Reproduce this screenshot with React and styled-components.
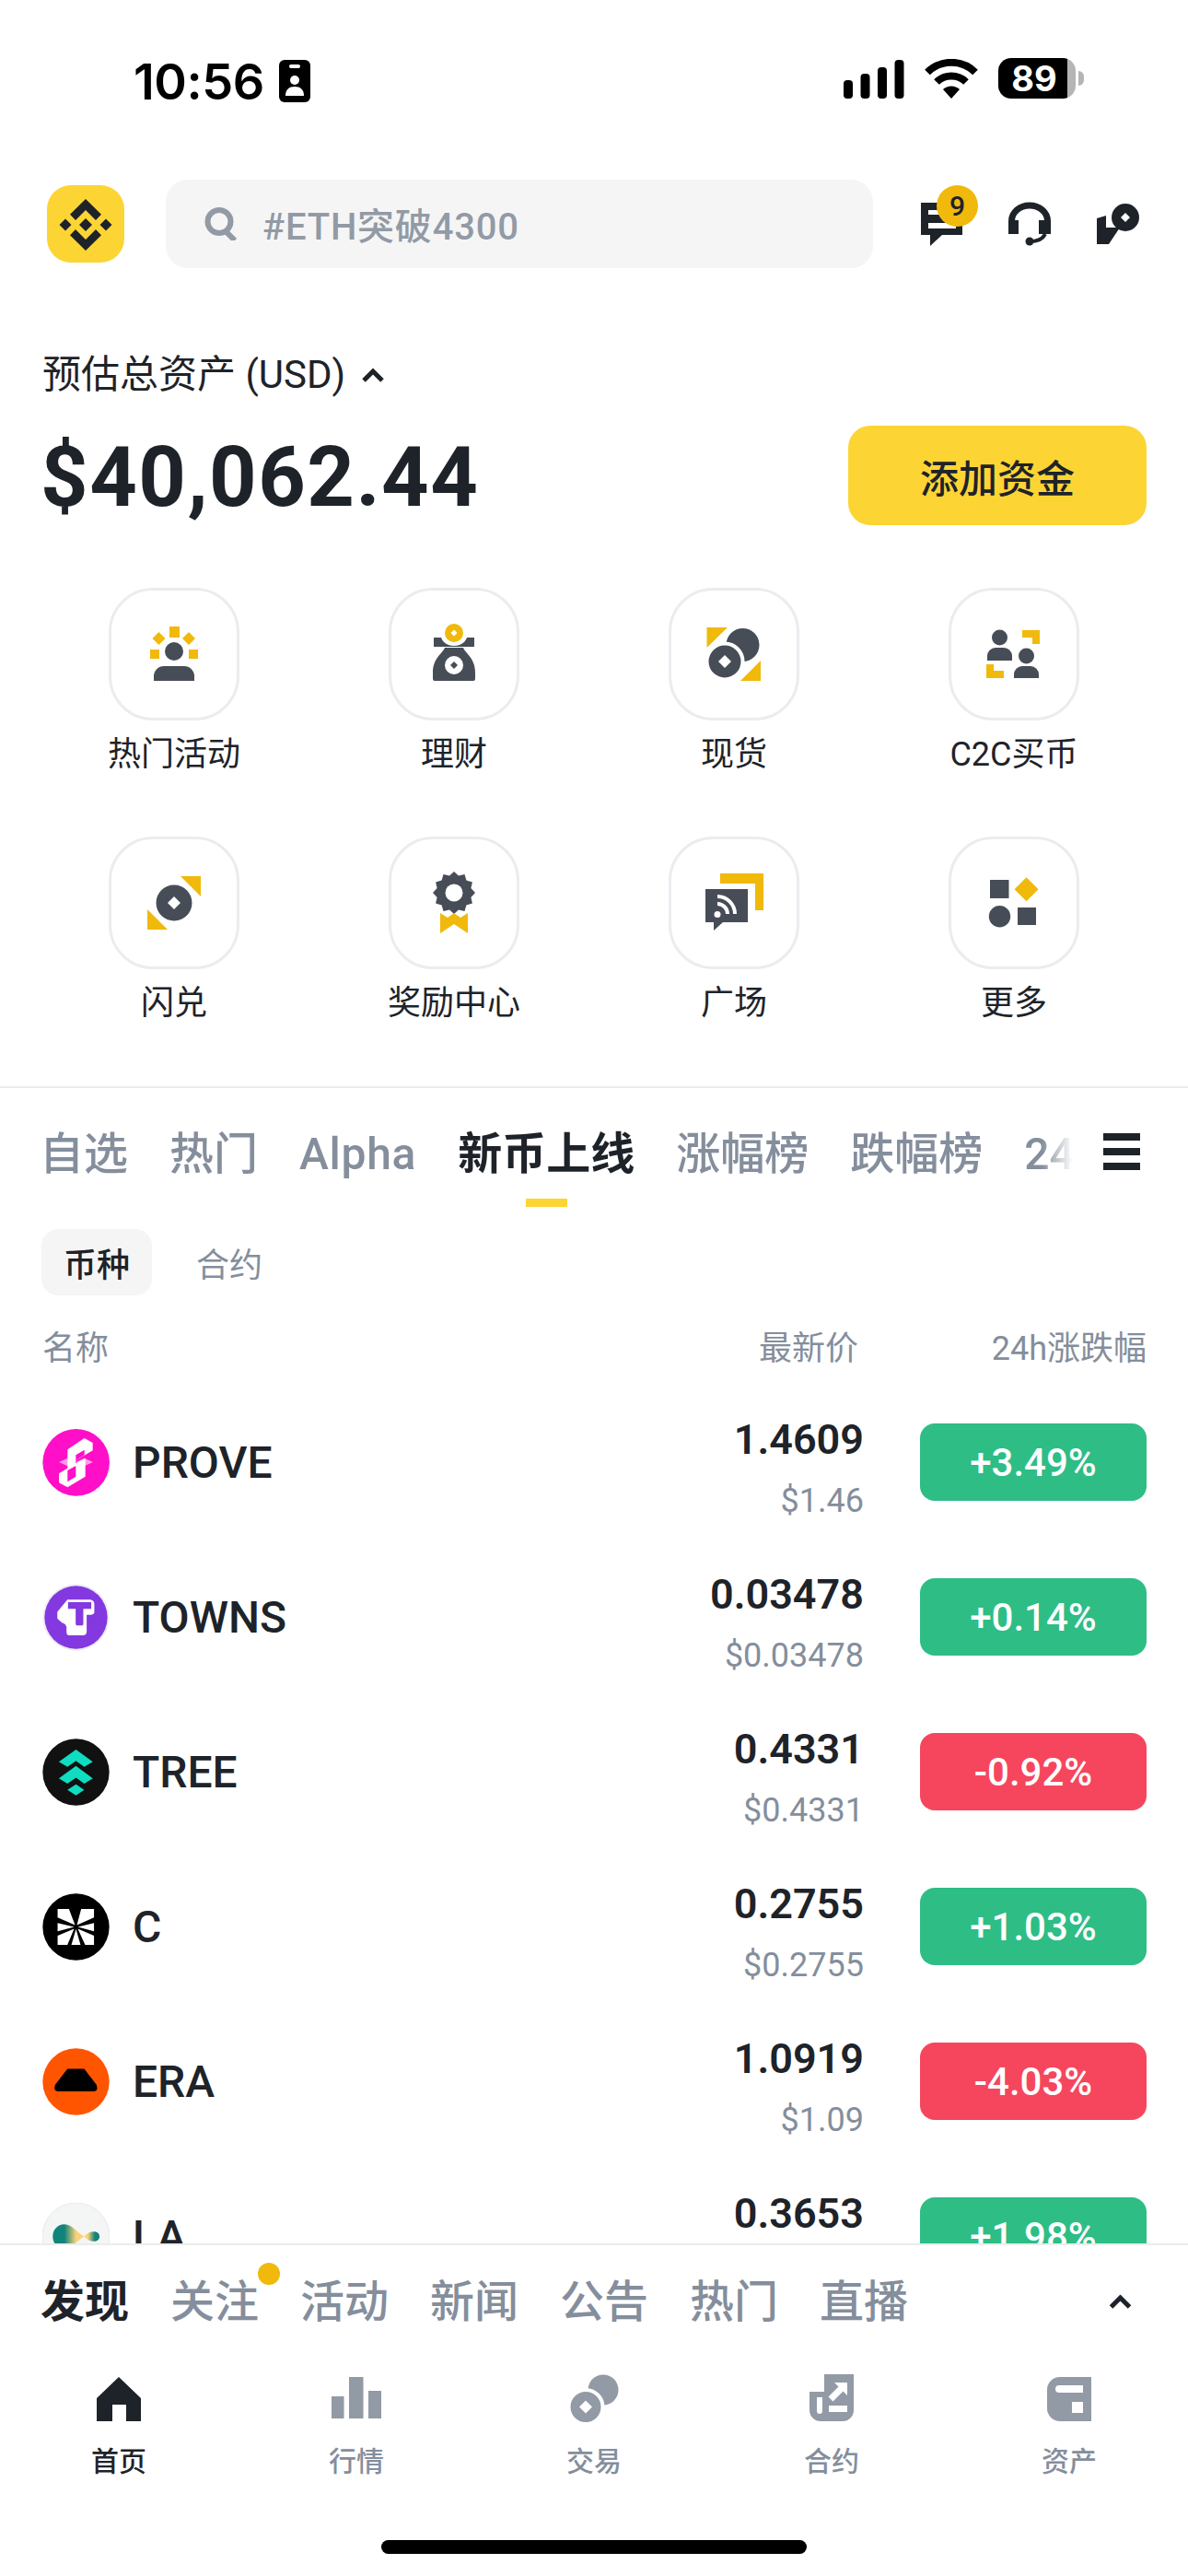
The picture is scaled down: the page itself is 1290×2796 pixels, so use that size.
import React from 'react'
import styled, { createGlobalStyle } from 'styled-components'

const DARK = '#1e2329'
const GRAY = '#848e9c'
const ICON = '#474d57'
const GOLD = '#f0b90b'
const YELLOW = '#fcd535'
const NAV_GRAY = '#929aa5'

const GlobalStyle = createGlobalStyle`
   html, body {
      margin: 0;
      padding: 0;
      background: #fff;
   }
   body {
      font-family: Roboto, "Noto Sans CJK SC", sans-serif;
      color: ${DARK};
   }
   * {
      box-sizing: border-box;
   }
`

const diamond = (cx, cy, r) => `${cx},${cy - r} ${cx + r},${cy} ${cx},${cy + r} ${cx - r},${cy}`

const star = (cx, cy, outer, inner, n) => {
   const pts = []
   for (let i = 0; i < n * 2; i++) {
      const r = i % 2 ? inner : outer
      const a = (Math.PI * i) / n - Math.PI / 2
      pts.push(`${(cx + r * Math.cos(a)).toFixed(1)},${(cy + r * Math.sin(a)).toFixed(1)}`)
   }
   return pts.join(' ')
}

const IdBadge = () => (
   <svg width="34" height="46" viewBox="0 0 34 46">
      <rect width="34" height="46" rx="6" fill="#000" />
      <rect x="11" y="5" width="12" height="4" rx="2" fill="#fff" />
      <circle cx="17" cy="22" r="5" fill="#fff" />
      <path d="M7 39c0-7 4-10 10-10s10 3 10 10z" fill="#fff" />
   </svg>
)

const SignalIcon = () => (
   <svg width="66" height="42" viewBox="0 0 66 42" fill="#000">
      <rect x="0" y="22" width="10" height="20" rx="4" />
      <rect x="18.500" y="15" width="10" height="27" rx="4" />
      <rect x="37" y="8" width="10" height="34" rx="4" />
      <rect x="55.500" y="0" width="10" height="42" rx="4" />
   </svg>
)

const WifiIcon = () => (
   <svg width="60" height="43" viewBox="0 0 60 43" fill="none" stroke="#000" strokeWidth="8">
      <path d="M4 14.500a37 37 0 0 1 52 0" />
      <path d="M14 25a23 23 0 0 1 32 0" />
      <path d="M30 43l-9-10a13 13 0 0 1 18 0z" fill="#000" stroke="none" />
   </svg>
)

const Logo = () => (
   <svg width="84" height="84" viewBox="0 0 84 84">
      <rect width="84" height="84" rx="26" fill={YELLOW} />
      <g fill={DARK}>
         <path d="M42 15l17 16.700-6 6.300-11-11-11 11-6-6.300z" />
         <path d="M42 71l17-16.700-6-6.300-11 11-11-11-6 6.300z" />
         <polygon points={diamond(42, 43, 7)} />
         <polygon points={diamond(20, 43, 6.500)} />
         <polygon points={diamond(64, 43, 6.500)} />
      </g>
   </svg>
)

const SearchIcon = () => (
   <svg width="38" height="36" viewBox="0 0 38 36" fill="none" stroke={NAV_GRAY}>
      <circle cx="18" cy="15.500" r="12.500" strokeWidth="6" />
      <path d="M24 25l11 11" strokeWidth="6" />
   </svg>
)

const MessageIcon = () => (
   <svg width="45" height="47" viewBox="0 0 45 47">
      <path d="M0 0h45v35H23L10 47V35H0z" fill={DARK} />
      <rect x="8" y="8" width="24" height="5" fill="#fff" />
      <rect x="8" y="22" width="30" height="6" fill="#fff" />
   </svg>
)

const HeadsetIcon = () => (
   <svg width="46" height="48" viewBox="0 0 46 48" fill="none" stroke={DARK}>
      <path d="M3.500 21a19.500 17 0 0 1 39 0" strokeWidth="7" />
      <rect x="0" y="20" width="11" height="15" fill={DARK} stroke="none" />
      <rect x="33" y="20" width="13" height="15" fill={DARK} stroke="none" />
      <path d="M40 35c-3 6-9 8-17 8" strokeWidth="4" />
      <circle cx="23" cy="43" r="4.500" fill={DARK} stroke="none" />
   </svg>
)

const TransferIcon = () => (
   <svg width="46" height="47" viewBox="0 0 46 47">
      <circle cx="31" cy="16" r="15" fill={DARK} />
      <polygon points={diamond(31, 16, 5)} fill="#fff" />
      <path d="M0 17l10-3v13h15L13 45H0z" fill={DARK} />
   </svg>
)

const Chevron = ({ width = 28 }) => (
   <svg width={width} height="18" viewBox="0 0 26 18" fill="none" stroke={DARK} strokeWidth="5">
      <path d="M3 15l10-10 10 10" />
   </svg>
)

const ActivityIcon = () => (
   <>
      <g fill={GOLD}>
         <rect x="31" y="6" width="11" height="12" />
         <polygon points={diamond(19.500, 19, 7)} />
         <polygon points={diamond(52, 19, 7)} />
         <rect x="10" y="31" width="10" height="10" />
         <rect x="52" y="31" width="10" height="10" />
      </g>
      <g fill={ICON}>
         <circle cx="36" cy="33" r="10" />
         <path d="M14 65V60a11 11 0 0 1 11-11h22a11 11 0 0 1 11 11v5z" />
      </g>
   </>
)

const EarnIcon = () => (
   <>
      <circle cx="36" cy="13" r="10" fill={GOLD} />
      <polygon points={diamond(36, 13, 3.500)} fill="#fff" />
      <g fill={ICON}>
         <path d="M14 18h8c2 6 8 9 14 9s12-3 14-9h8v10H14z" />
         <path d="M26 29h20c2 6 13 11 13 27v7a2 2 0 0 1-2 2H15a2 2 0 0 1-2-2v-7c0-16 11-21 13-27z" />
      </g>
      <circle cx="36" cy="48" r="10" fill="#fff" />
      <polygon points={diamond(36, 48, 4)} fill={ICON} />
   </>
)

const SpotIcon = () => (
   <>
      <g fill={GOLD}>
         <polygon points="6.500,7 29,7 6.500,29" />
         <polygon points="43,65 65,65 65,43" />
      </g>
      <circle cx="45.500" cy="26" r="18" fill={ICON} />
      <circle cx="26" cy="44" r="19.500" fill={ICON} stroke="#fff" strokeWidth="4" />
      <polygon points={diamond(26, 44, 7)} fill="#fff" />
   </>
)

const P2pIcon = () => (
   <>
      <g fill={ICON}>
         <circle cx="20.500" cy="18" r="8.500" />
         <path d="M7 43v-5a9 9 0 0 1 9-9h9a9 9 0 0 1 9 9v5z" />
         <circle cx="49.500" cy="38" r="8.500" />
         <path d="M36 62v-4a9 9 0 0 1 9-9h9a9 9 0 0 1 9 9v4z" />
      </g>
      <g fill={GOLD}>
         <path d="M45 10h19v15h-8v-7H45z" />
         <path d="M6 47h8v7h11v8H6z" />
      </g>
   </>
)

const ConvertIcon = () => (
   <>
      <g fill={GOLD}>
         <polygon points="43,7 65,7 65,29" />
         <polygon points="7,43 29,65 7,65" />
      </g>
      <circle cx="36" cy="36" r="19.500" fill={ICON} />
      <polygon points={diamond(36, 36, 7)} fill="#fff" />
   </>
)

const RewardIcon = () => (
   <>
      <polygon points={star(36, 25, 23, 19, 12)} fill={ICON} />
      <circle cx="36" cy="25" r="9.500" fill="#fff" />
      <polygon points="21,47 29,52 36,47 43,52 51,47 51,69 36,59 21,69" fill={GOLD} />
   </>
)

const SquareIcon = () => (
   <>
      <path d="M21 4h47v40h-9V15H21z" fill={GOLD} />
      <path d="M5 21h46v36H24l-10 9V57H5z" fill={ICON} />
      <circle cx="18" cy="48.500" r="3.500" fill="#fff" />
      <g fill="none" stroke="#fff" strokeWidth="4">
         <path d="M18 37a11 11 0 0 1 11 11" />
         <path d="M18 29a19 19 0 0 1 19 19" />
      </g>
   </>
)

const MoreIcon = () => (
   <>
      <rect x="10" y="11" width="20.500" height="20" fill={ICON} />
      <polygon points={diamond(49.500, 21.300, 13)} fill={GOLD} />
      <circle cx="20.500" cy="50.700" r="11.700" fill={ICON} />
      <rect x="40" y="41" width="20" height="19" fill={ICON} />
   </>
)

const ProveLogo = () => (
   <svg width="73" height="73" viewBox="18 15 219 219">
      <circle cx="128" cy="124" r="109" fill="#ff0fc8" />
      <polygon points="72,123 100,110 127,123 100,136" fill="#ff9ade" />
      <polygon points="127,123 155,110 183,123 155,136" fill="#ff9ade" />
      <polygon points="100,82 155,45 182,60 182,85 127,118 127,135 100,150" fill="#fff" />
      <polygon points="158,110 158,170 100,205 72,190 72,160 127,127" fill="#fff" />
      <polygon points="127,100 155,83 155,100 127,118" fill="#ff0fc8" />
      <polygon points="100,150 127,135 127,170 100,187" fill="#ff0fc8" />
   </svg>
)

const TownsLogo = () => (
   <svg width="73" height="73" viewBox="18 518 220 220">
      <circle cx="128" cy="628" r="109" fill="#eceef1" />
      <circle cx="128" cy="628" r="103" fill="#8338e0" />
      <path d="M100 570H175Q190 572 188 590V612Q186 620 170 620H163V675Q163 687 150 687H105Q97 687 97 675V660Q95 648 82 645L67 632V610Z" fill="#fff" />
      <path d="M102 578H178V600H152V650Q152 654 148 654H131Q127 654 127 650V600H102Z" fill="#8338e0" />
   </svg>
)

const TreeLogo = () => (
   <svg width="73" height="73" viewBox="18 1022 220 220">
      <circle cx="128" cy="1132" r="109" fill="#111" />
      <g fill="#0fdcc0">
         <polygon points="72,1098 128,1058 183,1098 155,1115 128,1095 100,1115" />
         <polygon points="72,1152 128,1112 183,1152 155,1170 128,1150 100,1170" />
         <polygon points="100,1190 128,1172 155,1190 128,1208" />
      </g>
   </svg>
)

const CLogo = () => (
   <svg width="73" height="73" viewBox="18 11 220 220">
      <circle cx="128" cy="121" r="109" fill="#000" />
      <g fill="#fff">
         <polygon points="68,62 105,62 125,115 68,90" />
         <polygon points="145,62 187,62 187,90 131,115" />
         <polygon points="68,108 68,135 122,121" />
         <polygon points="187,108 187,135 134,121" />
         <polygon points="68,150 122,127 100,180 68,180" />
         <polygon points="187,150 134,127 158,180 187,180" />
         <polygon points="113,180 143,180 128,128" />
      </g>
   </svg>
)

const EraLogo = () => (
   <svg width="73" height="73" viewBox="18 515 220 220">
      <circle cx="128" cy="625" r="109" fill="#ff5500" />
      <path d="M100 583H155L195 635Q202 655 188 657H68Q53 655 60 635Z" fill="#000" />
   </svg>
)

const LaLogo = () => (
   <svg width="73" height="73" viewBox="18 1020 220 220">
      <defs>
         <linearGradient id="la-fill" x1="0" y1="0" x2="1" y2="0">
            <stop offset="0.25" stopColor="#12837a" />
            <stop offset="0.5" stopColor="#fbd27a" />
            <stop offset="0.75" stopColor="#fbd27a" />
            <stop offset="0.9" stopColor="#12837a" />
         </linearGradient>
      </defs>
      <circle cx="128" cy="1130" r="110" fill="#f4f5f5" stroke="#e6e8ea" strokeWidth="3" />
      <path d="M90 1090C115 1090 135 1120 155 1130C170 1110 205 1108 205 1130C205 1152 170 1150 155 1130C135 1140 115 1170 90 1170C68 1170 52 1152 52 1130C52 1108 68 1090 90 1090Z" fill="url(#la-fill)" />
   </svg>
)

const HomeIcon = () => <path d="M32 8l24 23v25H40V38H25v18H8V31z" fill={DARK} />

const MarketIcon = () => (
   <g fill={NAV_GRAY}>
      <rect x="5" y="29" width="13.500" height="24" />
      <rect x="24" y="8" width="15.500" height="45" />
      <rect x="45" y="23" width="14" height="30" />
   </g>
)

const TradeIcon = () => (
   <>
      <circle cx="42" cy="22" r="16.500" fill={NAV_GRAY} />
      <circle cx="23" cy="40.500" r="18.500" fill={NAV_GRAY} stroke="#fff" strokeWidth="4" />
      <polygon points={diamond(23, 40.500, 7)} fill="#fff" />
   </>
)

const FuturesIcon = () => (
   <>
      <path d="M24 5h32v39a12 12 0 0 1-12 12H20A12 12 0 0 1 8 44V24h16z" fill={NAV_GRAY} />
      <path d="M16 30h6v15a3 3 0 0 1-6 0z" fill="#fff" />
      <rect x="29" y="39" width="20" height="7" fill="#fff" />
      <polygon points="35,14 49,14 49,28" fill="#fff" />
      <path d="M43 20L31 32" stroke="#fff" strokeWidth="7" />
   </>
)

const AssetsIcon = () => (
   <>
      <path d="M22 8h34v48H22A14 14 0 0 1 8 42V22A14 14 0 0 1 22 8z" fill={NAV_GRAY} />
      <path d="M21 17h26v8H21a4 4 0 0 1 0-8z" fill="#fff" />
      <rect x="35" y="35" width="12" height="12" fill="#fff" />
   </>
)

const shortcuts = [
   { label: '热门活动', Icon: ActivityIcon },
   { label: '理财', Icon: EarnIcon },
   { label: '现货', Icon: SpotIcon },
   { label: 'C2C买币', Icon: P2pIcon },
   { label: '闪兑', Icon: ConvertIcon },
   { label: '奖励中心', Icon: RewardIcon },
   { label: '广场', Icon: SquareIcon },
   { label: '更多', Icon: MoreIcon },
]

const marketTabs = ['自选', '热门', 'Alpha', '新币上线', '涨幅榜', '跌幅榜', '24h']

const coins = [
   { name: 'PROVE', price: '1.4609', usd: '$1.46', change: '+3.49%', Logo: ProveLogo },
   { name: 'TOWNS', price: '0.03478', usd: '$0.03478', change: '+0.14%', Logo: TownsLogo },
   { name: 'TREE', price: '0.4331', usd: '$0.4331', change: '-0.92%', Logo: TreeLogo },
   { name: 'C', price: '0.2755', usd: '$0.2755', change: '+1.03%', Logo: CLogo },
   { name: 'ERA', price: '1.0919', usd: '$1.09', change: '-4.03%', Logo: EraLogo },
   { name: 'LA', price: '0.3653', change: '+1.98%', Logo: LaLogo },
]

const feedTabs = ['发现', '关注', '活动', '新闻', '公告', '热门', '直播']

const navItems = [
   { label: '首页', Icon: HomeIcon, active: true },
   { label: '行情', Icon: MarketIcon },
   { label: '交易', Icon: TradeIcon },
   { label: '合约', Icon: FuturesIcon },
   { label: '资产', Icon: AssetsIcon },
]

export default function App() {
   return (
      <Page>
         <GlobalStyle />
         <StatusBar>
            <Clock>
               10:56
               <IdBadge />
            </Clock>
            <StatusIcons>
               <SignalIcon />
               <WifiIcon />
               <Battery>89</Battery>
            </StatusIcons>
         </StatusBar>

         <Header>
            <Logo />
            <SearchBox>
               <SearchIcon />
               <SearchText>#ETH突破4300</SearchText>
            </SearchBox>
            <HeaderIcons>
               <MessageWrap>
                  <MessageIcon />
                  <Badge>9</Badge>
               </MessageWrap>
               <HeadsetIcon />
               <TransferIcon />
            </HeaderIcons>
         </Header>

         <AssetLabel>
            预估总资产 (USD)
            <Chevron />
         </AssetLabel>
         <BalanceRow>
            <Balance>$40,062.44</Balance>
            <AddFunds>添加资金</AddFunds>
         </BalanceRow>

         <ShortcutGrid>
            {shortcuts.map(({ label, Icon }) => (
               <Shortcut key={label}>
                  <ShortcutTile>
                     <svg width="72" height="72" viewBox="0 0 72 72">
                        <Icon />
                     </svg>
                  </ShortcutTile>
                  <ShortcutLabel>{label}</ShortcutLabel>
               </Shortcut>
            ))}
         </ShortcutGrid>

         <Divider />

         <TabBar>
            <TabScroller>
               {marketTabs.map((tab) => (
                  <MarketTab key={tab} $active={tab === '新币上线'} $spaced={tab === 'Alpha'}>
                     {tab}
                  </MarketTab>
               ))}
            </TabScroller>
            <Hamburger>
               <span />
               <span />
               <span />
            </Hamburger>
         </TabBar>

         <SubTabs>
            <SubTab $active>币种</SubTab>
            <SubTab>合约</SubTab>
         </SubTabs>

         <TableHead>
            <HeadName>名称</HeadName>
            <HeadPrice>最新价</HeadPrice>
            <HeadChange>24h涨跌幅</HeadChange>
         </TableHead>

         <CoinList>
            {coins.map(({ name, price, usd, change, Logo: CoinLogo }) => (
               <CoinRow key={name}>
                  <CoinLogo />
                  <CoinName>{name}</CoinName>
                  <PriceCol>
                     <Price>{price}</Price>
                     {usd && <UsdPrice>{usd}</UsdPrice>}
                  </PriceCol>
                  <ChangePill $down={change.startsWith('-')}>{change}</ChangePill>
               </CoinRow>
            ))}
         </CoinList>

         <BottomSheet>
            <FeedTabs>
               {feedTabs.map((tab) => (
                  <FeedTab key={tab} $active={tab === '发现'} $dot={tab === '关注'}>
                     {tab}
                  </FeedTab>
               ))}
               <FeedToggle>
                  <Chevron width={31} />
               </FeedToggle>
            </FeedTabs>
            <Nav>
               {navItems.map(({ label, Icon, active }) => (
                  <NavItem key={label} $active={active}>
                     <svg width="64" height="64" viewBox="0 0 64 64">
                        <Icon />
                     </svg>
                     <NavLabel>{label}</NavLabel>
                  </NavItem>
               ))}
            </Nav>
            <HomeIndicator />
         </BottomSheet>
      </Page>
   )
}

const Page = styled.div`
   width: 1290px;
   height: 2796px;
   display: flex;
   flex-direction: column;
   overflow: hidden;
   background: #fff;
`

const StatusBar = styled.div`
   height: 195px;
   flex-shrink: 0;
   display: flex;
   justify-content: space-between;
   align-items: flex-start;
   padding: 60px 122px 0 145px;
`

const Clock = styled.div`
   display: flex;
   align-items: center;
   gap: 16px;
   height: 56px;
   font-family: Inter, sans-serif;
   font-size: 54px;
   font-weight: 600;
   letter-spacing: -0.5px;
   color: #000;
`

const StatusIcons = styled.div`
   display: flex;
   align-items: flex-end;
   gap: 21px;
   height: 48px;
   padding-bottom: 1px;
`

const Battery = styled.div`
   position: relative;
   width: 84px;
   height: 44px;
   border-radius: 14px;
   display: flex;
   align-items: center;
   justify-content: center;
   padding-right: 6px;
   font-family: Inter, sans-serif;
   font-size: 38px;
   font-weight: 700;
   color: #fff;
   background: linear-gradient(90deg, #000 89%, #b5b5b8 89%);
   &::after {
      content: '';
      position: absolute;
      right: -9px;
      top: 14px;
      width: 6px;
      height: 16px;
      border-radius: 0 6px 6px 0;
      background: #b5b5b8;
   }
`

const Header = styled.div`
   height: 96px;
   flex-shrink: 0;
   display: flex;
   align-items: center;
   padding-left: 51px;
   gap: 45px;
`

const SearchBox = styled.div`
   width: 768px;
   height: 96px;
   display: flex;
   align-items: center;
   gap: 27px;
   padding: 0 0 0 40px;
   border-radius: 24px;
   background: #f5f5f5;
`

const SearchText = styled.span`
   font-size: 40px;
   font-weight: 500;
   letter-spacing: 0.8px;
   color: ${NAV_GRAY};
`

const HeaderIcons = styled.div`
   display: flex;
   align-items: center;
   gap: 50px;
   margin-left: 7px;
`

const MessageWrap = styled.div`
   position: relative;
   height: 47px;
   width: 45px;
`

const Badge = styled.span`
   position: absolute;
   left: 17px;
   top: -19px;
   width: 45px;
   height: 45px;
   border-radius: 50%;
   background: ${GOLD};
   display: flex;
   align-items: center;
   justify-content: center;
   font-size: 30px;
   font-weight: 500;
   color: ${DARK};
`

const AssetLabel = styled.div`
   margin-top: 91px;
   height: 50px;
   padding-left: 46px;
   display: flex;
   align-items: center;
   gap: 16px;
   font-size: 42px;
   line-height: 50px;
   flex-shrink: 0;
`

const BalanceRow = styled.div`
   margin-top: 30px;
   height: 108px;
   flex-shrink: 0;
   display: flex;
   align-items: center;
   justify-content: space-between;
   padding: 0 45px 0 44px;
`

const Balance = styled.div`
   font-size: 90px;
   font-weight: 700;
   line-height: 108px;
   letter-spacing: 1.5px;
   padding-top: 6px;
`

const AddFunds = styled.button`
   width: 324px;
   height: 108px;
   border: none;
   border-radius: 24px;
   background: ${YELLOW};
   font-family: inherit;
   font-size: 42px;
   font-weight: 500;
   color: ${DARK};
`

const ShortcutGrid = styled.div`
   margin: 68px 37px 0;
   display: grid;
   grid-template-columns: repeat(4, 304px);
   grid-auto-rows: 270px;
   flex-shrink: 0;
`

const Shortcut = styled.div`
   display: flex;
   flex-direction: column;
   align-items: center;
`

const ShortcutTile = styled.div`
   width: 142px;
   height: 144px;
   border: 3px solid #eaecef;
   border-radius: 48px;
   display: flex;
   align-items: center;
   justify-content: center;
`

const ShortcutLabel = styled.div`
   margin-top: 13px;
   font-size: 36px;
   line-height: 48px;
   white-space: nowrap;
`

const Divider = styled.div`
   margin-top: 1px;
   height: 2px;
   flex-shrink: 0;
   background: #eaecef;
`

const TabBar = styled.div`
   margin-top: 35px;
   height: 94px;
   flex-shrink: 0;
   display: flex;
   align-items: flex-start;
   padding-left: 43px;
`

const TabScroller = styled.div`
   width: 1122px;
   height: 94px;
   display: flex;
   gap: 45px;
   overflow: hidden;
   mask-image: linear-gradient(90deg, #000 1088px, transparent 1122px);
`

const MarketTab = styled.div`
   position: relative;
   flex-shrink: 0;
   font-size: 48px;
   line-height: 74px;
   letter-spacing: ${({ $spaced }) => ($spaced ? '0.7px' : '0')};
   font-weight: ${({ $active }) => ($active ? 700 : 500)};
   color: ${({ $active }) => ($active ? DARK : GRAY)};
   &::after {
      content: '';
      display: ${({ $active }) => ($active ? 'block' : 'none')};
      position: absolute;
      left: 50%;
      top: 85px;
      width: 45px;
      height: 9px;
      margin-left: -22px;
      background: ${YELLOW};
   }
`

const Hamburger = styled.div`
   margin: 14px 0 0 33px;
   width: 40px;
   height: 40px;
   display: flex;
   flex-direction: column;
   justify-content: space-between;
   span {
      display: block;
      height: 8px;
      background: ${DARK};
   }
`

const SubTabs = styled.div`
   margin-top: 24px;
   height: 72px;
   flex-shrink: 0;
   display: flex;
   padding-left: 45px;
   gap: 0;
`

const SubTab = styled.div`
   padding: 0 24px;
   border-radius: 18px;
   display: flex;
   align-items: center;
   font-size: 36px;
   font-weight: ${({ $active }) => ($active ? 500 : 400)};
   color: ${({ $active }) => ($active ? DARK : GRAY)};
   background: ${({ $active }) => ($active ? '#f5f5f5' : 'transparent')};
   & + & {
      margin-left: 24px;
   }
`

const TableHead = styled.div`
   margin-top: 29px;
   height: 50px;
   flex-shrink: 0;
   display: flex;
   align-items: center;
   padding: 0 45px 0 46px;
   font-size: 36px;
   color: ${GRAY};
`

const HeadName = styled.span`
   flex: 1;
`

const HeadPrice = styled.span`
   margin-right: 67px;
`

const HeadChange = styled.span`
   width: 246px;
   text-align: right;
`

const CoinList = styled.div`
   margin-top: 18px;
   flex: 1;
   min-height: 0;
   overflow: hidden;
`

const CoinRow = styled.div`
   height: 168px;
   display: flex;
   align-items: center;
   padding: 0 45px 0 46px;
   svg {
      flex-shrink: 0;
   }
`

const CoinName = styled.div`
   flex: 1;
   margin-left: 25px;
   font-size: 48px;
   font-weight: 500;
`

const PriceCol = styled.div`
   align-self: flex-start;
   margin: 35px 61px 0 0;
   text-align: right;
`

const Price = styled.div`
   font-size: 45px;
   font-weight: 600;
   line-height: 50px;
`

const UsdPrice = styled.div`
   margin-top: 16px;
   font-size: 36px;
   line-height: 50px;
   color: ${GRAY};
`

const ChangePill = styled.div`
   width: 246px;
   height: 84px;
   border-radius: 16px;
   display: flex;
   align-items: center;
   justify-content: center;
   font-size: 42px;
   font-weight: 500;
   color: #fff;
   background: ${({ $down }) => ($down ? '#f6465d' : '#2ebd85')};
`

const BottomSheet = styled.div`
   flex-shrink: 0;
   height: 361px;
   border-top: 2px solid #eaecef;
   background: #fff;
`

const FeedTabs = styled.div`
   margin-top: 27px;
   height: 68px;
   display: flex;
   gap: 45px;
   padding: 0 58px 0 44px;
`

const FeedTab = styled.div`
   position: relative;
   font-size: 48px;
   line-height: 70px;
   font-weight: ${({ $active }) => ($active ? 700 : 500)};
   color: ${({ $active }) => ($active ? DARK : GRAY)};
   &::after {
      content: '';
      display: ${({ $dot }) => ($dot ? 'block' : 'none')};
      position: absolute;
      right: -23px;
      top: -8px;
      width: 24px;
      height: 24px;
      border-radius: 50%;
      background: ${GOLD};
   }
`

const FeedToggle = styled.div`
   margin-left: auto;
   display: flex;
   align-items: center;
`

const Nav = styled.div`
   margin-top: 40px;
   display: grid;
   grid-template-columns: repeat(5, 258px);
`

const NavItem = styled.div`
   display: flex;
   flex-direction: column;
   align-items: center;
   gap: 16px;
   color: ${({ $active }) => ($active ? DARK : GRAY)};
`

const NavLabel = styled.span`
   font-size: 30px;
   line-height: 40px;
   font-weight: 500;
`

const HomeIndicator = styled.div`
   width: 462px;
   height: 15px;
   margin: 65px auto 0;
   border-radius: 8px;
   background: #000;
`
